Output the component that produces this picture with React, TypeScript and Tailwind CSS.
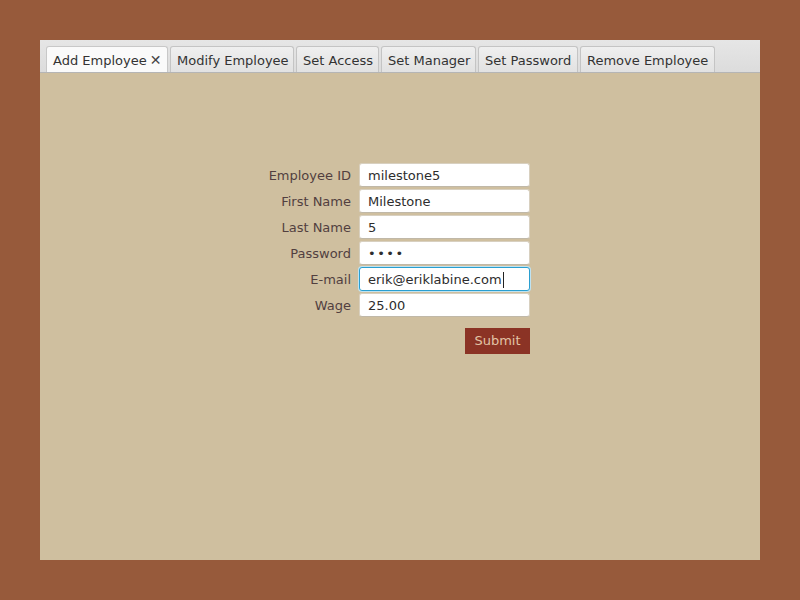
import React from "react";

const tabs = [
  { label: "Add Employee", w: 122, active: true },
  { label: "Modify Employee", w: 124 },
  { label: "Set Access", w: 83 },
  { label: "Set Manager", w: 95 },
  { label: "Set Password", w: 100 },
  { label: "Remove Employee", w: 135 },
];

const rows = [
  { label: "Employee ID", value: "milestone5" },
  { label: "First Name", value: "Milestone" },
  { label: "Last Name", value: "5" },
  { label: "Password", value: "••••" },
  { label: "E-mail", value: "erik@eriklabine.com", focused: true },
  { label: "Wage", value: "25.00" },
];

export default function App() {
  return (
    <div
      className="w-[800px] h-[600px] bg-[#975a3b] p-[40px]"
      style={{ fontFamily: '"DejaVu Sans", sans-serif' }}
    >
      <div className="w-[720px] h-[520px] bg-[#cfbf9f] flex flex-col">
        <div className="h-[33px] bg-gradient-to-b from-[#e6e6e6] to-[#dcdcdc] border-b border-[#b5b5b5] flex items-end gap-[2px] pl-[6px]">
          {tabs.map((t) => (
            <div
              key={t.label}
              style={{ width: t.w }}
              className={`h-[26px] rounded-t-[3px] border border-b-0 flex items-center pl-[6px] pt-[2px] text-[13px] text-[#333] ${
                t.active
                  ? "bg-[#fafafa] border-[#c8c8c8]"
                  : "bg-gradient-to-b from-[#efefef] to-[#e2e2e2] border-[#c4c4c4]"
              }`}
            >
              <span>{t.label}</span>
              {t.active && <span className="ml-[3px] text-[14px] text-[#444]">✕</span>}
            </div>
          ))}
        </div>
        <div className="flex-1 pt-[90px] pl-[228px]">
          <div className="grid grid-cols-[83px_171px] gap-x-[8px] gap-y-[2px]">
            {rows.map((r) => (
              <React.Fragment key={r.label}>
                <div className="h-[24px] flex items-center justify-end pt-[1px] text-[13px] text-[#523f3f]">
                  {r.label}
                </div>
                <div
                  className={`h-[24px] bg-white rounded-[3px] flex items-center pl-[8px] pt-[1px] text-[13px] text-[#2d2d2d] ${
                    r.focused
                      ? "border border-[#2a9fd0] shadow-[0_0_0_1px_#bfe3f2]"
                      : "border border-[#d8d0c0] border-b-[#c0b8a8]"
                  }`}
                >
                  <span className={r.label === "Password" ? "tracking-[1.5px]" : ""}>
                    {r.value}
                  </span>
                  {r.focused && <span className="w-[1px] h-[16px] bg-[#222] ml-[1px]" />}
                </div>
              </React.Fragment>
            ))}
            <div />
            <div className="flex justify-end mt-[9px]">
              <div className="w-[65px] h-[26px] bg-[#8b3325] text-[#e2c4a6] text-[13px] flex items-center justify-center">
                Submit
              </div>
            </div>
          </div>
        </div>
      </div>
    </div>
  );
}
